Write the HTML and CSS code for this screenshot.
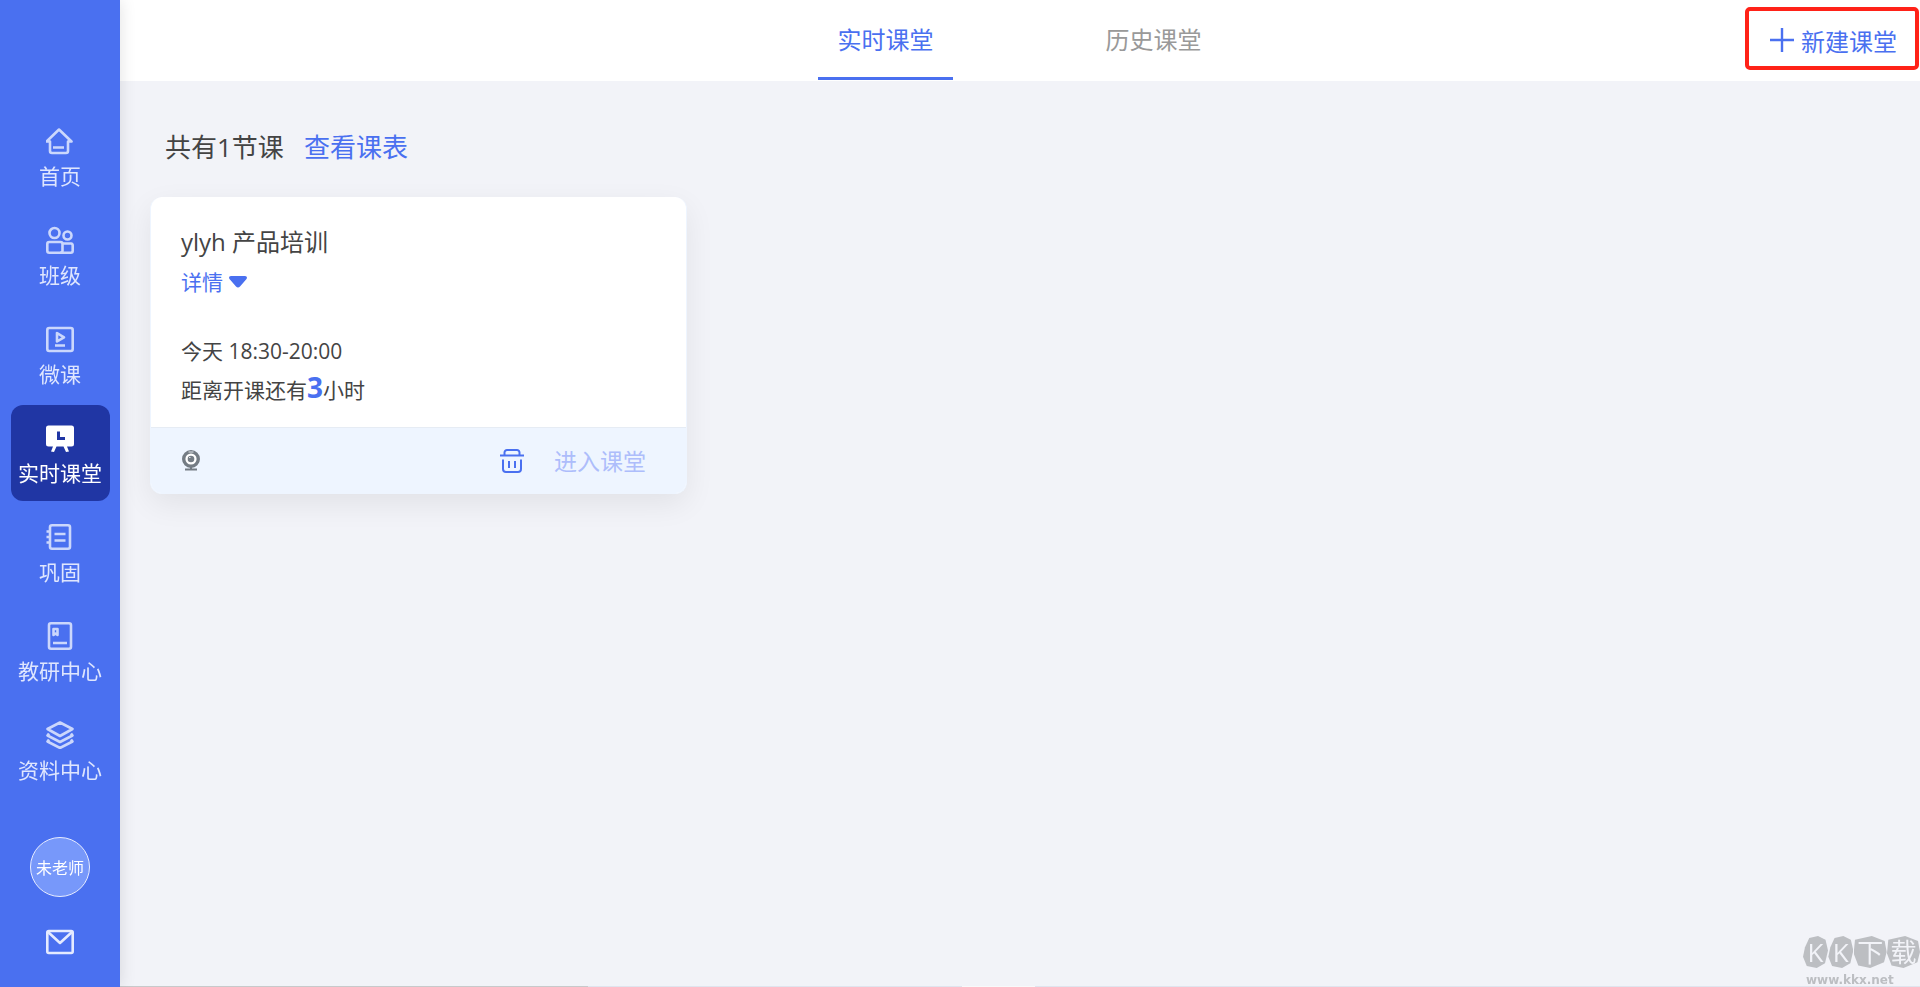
FILE: index.html
```html
<!DOCTYPE html>
<html lang="zh-CN">
<head>
    <meta charset="UTF-8">
    <meta name="viewport" content="width=device-width, initial-scale=1.0">
    <title>实时课堂</title>
    <link rel="stylesheet" href="styles.css">
</head>
<body>
    <aside class="sidebar">
        <nav class="menu">
            <a class="menu-item" href="#">
                <svg class="icon" viewBox="0 0 28 28"><path d="M4 14.500H.5L13 2.500l12.500 12H22V24a2 2 0 0 1-2 2H6a2 2 0 0 1-2-2zM7 20.500h11"/></svg>
                <span>首页</span>
            </a>
            <a class="menu-item" href="#">
                <svg class="icon" viewBox="0 0 28 28"><circle cx="8.500" cy="7" r="5"/><circle cx="21.500" cy="9.500" r="4"/><rect x="1.300" y="16" width="15.200" height="10.700" rx="2"/><path d="M16.500 17.500H25a2 2 0 0 1 1.700 2v5.200a2 2 0 0 1-2 2H14"/></svg>
                <span>班级</span>
            </a>
            <a class="menu-item" href="#">
                <svg class="icon" viewBox="0 0 28 28"><rect x="1.300" y="3" width="25.400" height="23" rx="2"/><path d="M11 8v8.500l7-4.200zM9 20.500h10"/></svg>
                <span>微课</span>
            </a>
            <a class="menu-item active" href="#">
                <svg class="icon" viewBox="0 0 28 28"><path class="solid" d="M2.500 1.500h23A2.500 2.500 0 0 1 28 4v16a2.500 2.500 0 0 1-2.500 2.500H21l2 5-3 .5-2.500-5.500h-7L8 28l-3-.5 2-5H2.500A2.500 2.500 0 0 1 0 20V4a2.500 2.500 0 0 1 2.500-2.500z"/><path class="hand" d="M12.500 7.500v7H19"/></svg>
                <span>实时课堂</span>
            </a>
            <a class="menu-item" href="#">
                <svg class="icon" viewBox="0 0 28 28"><rect x="4" y="2.300" width="20" height="23.500" rx="2"/><path d="M4 8.500H.5M4 14H.5M4 19.500H.5M8.500 11h11M8.500 17.500h11"/></svg>
                <span>巩固</span>
            </a>
            <a class="menu-item" href="#">
                <svg class="icon" viewBox="0 0 28 28"><rect x="3" y="1.300" width="22" height="25.400" rx="2"/><path d="M7.500 13V7h4v6l-2-1.500zM7 21h14"/></svg>
                <span>教研中心</span>
            </a>
            <a class="menu-item" href="#">
                <svg class="icon" viewBox="0 0 28 28"><path d="M14 1.500L26.500 8 14 15 1.500 8zM3 12.500L1.500 14.500 14 21l12.500-6.500-1.500-2M3 18.500l-1.500 2L14 27l12.500-6.500-1.500-2"/></svg>
                <span>资料中心</span>
            </a>
        </nav>
        <button class="avatar" type="button">未老师</button>
        <button class="mail" type="button" aria-label="消息">
            <svg class="icon" viewBox="0 0 28 28"><rect x="1.300" y="3" width="25.400" height="22" rx="1.500"/><path d="M2 4l12 11L26 4"/></svg>
        </button>
    </aside>

    <div class="page">
        <header class="topbar">
            <nav class="tabs">
                <a class="tab current" href="#">实时课堂</a>
                <a class="tab" href="#">历史课堂</a>
            </nav>
            <button class="create" type="button">
                <svg class="plus" viewBox="0 0 24 24"><path d="M12 0v24M0 12h24"/></svg>
                新建课堂
            </button>
        </header>

        <main class="content">
            <div class="summary">
                <span>共有1节课</span>
                <a href="#">查看课表</a>
            </div>

            <article class="card">
                <div class="card-body">
                    <h2>ylyh 产品培训</h2>
                    <button class="detail" type="button">
                        详情
                        <svg class="caret" viewBox="0 0 18 12"><path d="M2 0h14c2 0 2.500 2 1.300 3.200L11 10.500c-1.200 1.300-2.800 1.300-4 0L.7 3.200C-.5 2 0 0 2 0z"/></svg>
                    </button>
                    <p class="time">今天 18:30-20:00</p>
                    <p class="countdown">距离开课还有<strong>3</strong>小时</p>
                </div>
                <footer class="card-footer">
                    <svg class="webcam" viewBox="0 0 18 21"><circle class="ring" cx="9" cy="9" r="7.300"/><circle cx="9" cy="9" r="3.300"/><path d="M8 16h2v2.500h5v2H3v-2h5z"/><path class="shine" d="M6.500 2h5M7 7.500h1.500"/></svg>
                    <button class="remove" type="button" aria-label="删除">
                        <svg class="trash" viewBox="0 0 24 24"><path d="M0 6.500h24M4.500 6V3.500A2.500 2.500 0 0 1 7 1h10a2.500 2.500 0 0 1 2.500 2.500V6M3 10.500V20a3 3 0 0 0 3 3h12a3 3 0 0 0 3-3v-9.500M9 12v7M15 12v7"/></svg>
                    </button>
                    <button class="enter" type="button" disabled>进入课堂</button>
                </footer>
            </article>
        </main>
    </div>

    <div class="watermark">
        <div class="watermark-name"><span>K</span><span>K</span><span class="wide">下</span><span class="wide">载</span></div>
        <div class="watermark-url">www.kkx.net</div>
    </div>
    <div class="edge"></div>
</body>
</html>
```
FILE: styles.css
```css
* {
    box-sizing: border-box;
}
body {
    margin: 0;
    min-height: 100vh;
    display: flex;
    background: #f2f3f8;
    color: #444;
    font-family: "Open Sans", "Noto Sans CJK SC", sans-serif;
    font-weight: 400;
}
a {
    color: #4a70f0;
    text-decoration: none;
}
button {
    padding: 0;
    border: none;
    background: none;
    color: #4a70f0;
    font: inherit;
    cursor: pointer;
}
svg {
    display: block;
    flex: none;
}

/* sidebar */
.sidebar {
    width: 120px;
    flex: none;
    padding-top: 108px;
    display: flex;
    flex-direction: column;
    align-items: center;
    background: #4a70f0;
    box-shadow: 0 0 16px rgba(0, 0, 0, 0.12);
    z-index: 1;
}
.menu {
    display: flex;
    flex-direction: column;
    gap: 3px;
}
.menu-item {
    width: 99px;
    height: 96px;
    padding-top: 19px;
    display: flex;
    flex-direction: column;
    align-items: center;
    gap: 6px;
    border-radius: 12px;
    color: #dfe6fe;
    font-size: 21px;
    line-height: 30px;
    white-space: nowrap;
}
.menu-item.active {
    background: #2036a4;
    color: #fff;
}
.icon {
    width: 28px;
    height: 28px;
    fill: none;
    stroke: #cbd7fc;
    stroke-width: 2.6;
    stroke-linejoin: round;
}
.icon .solid {
    fill: #fff;
    stroke: none;
}
.icon .hand {
    stroke: #2036a4;
    stroke-width: 3;
    stroke-linejoin: miter;
}
.avatar {
    width: 60px;
    height: 60px;
    margin-top: 39px;
    border: 1px solid #e8edff;
    border-radius: 50%;
    background: #7798fa;
    color: #fff;
    font-size: 16px;
    white-space: nowrap;
}
.mail {
    margin-top: 31px;
}
.mail .icon {
    stroke: #e4eaff;
}

/* top bar */
.page {
    flex: 1;
    min-width: 0;
}
.topbar {
    height: 81px;
    display: grid;
    grid-template-columns: 1fr auto 1fr;
    align-items: start;
    padding-right: 1px;
    background: #fff;
    font-size: 24px;
}
.tabs {
    grid-column: 2;
    display: flex;
    gap: 133px;
}
.tab {
    width: 135px;
    height: 80px;
    border-bottom: 3px solid transparent;
    color: #999;
    line-height: 80px;
    text-align: center;
}
.tab.current {
    border-color: #4a70f0;
    color: #4a70f0;
}
.create {
    justify-self: end;
    height: 63px;
    margin-top: 7px;
    padding: 3px 18px 0 21px;
    display: flex;
    align-items: center;
    gap: 7px;
    border: 4px solid #ff2218;
    border-radius: 5px;
}
.plus {
    width: 24px;
    height: 24px;
    fill: none;
    stroke: #4a70f0;
    stroke-width: 2.4;
}

/* lesson list */
.content {
    padding: 46px 30px;
}
.summary {
    padding-left: 15px;
    display: flex;
    gap: 20px;
    font-size: 26px;
    line-height: 40px;
}
.card {
    width: 537px;
    margin-top: 30px;
    overflow: hidden;
    border: 1px solid #eef5ff;
    border-top: none;
    border-radius: 12px;
    background: #fff;
    box-shadow: 0 10px 30px rgba(0, 0, 0, 0.07);
}
.card-body {
    padding: 27px 30px 17px;
    font-size: 21px;
    line-height: 39px;
}
.card h2 {
    margin: 0 0 2px;
    font-size: 24px;
    font-weight: 400;
    line-height: 36px;
}
.detail {
    display: flex;
    align-items: center;
    gap: 6px;
    line-height: 40px;
}
.caret {
    width: 18px;
    height: 12px;
    fill: #4a70f0;
}
.card p {
    margin: 0;
}
.card .time {
    margin-top: 30px;
}
.countdown strong {
    color: #4a70f0;
    font-size: 28px;
    font-weight: 700;
    line-height: 30px;
}
.card-footer {
    height: 66px;
    padding: 0 40px 0 31px;
    display: flex;
    align-items: center;
    border-top: 1px solid #e6ecf4;
    background: #eef5ff;
}
.webcam {
    width: 18px;
    height: 21px;
    fill: #747c84;
}
.webcam .ring {
    fill: #fff;
    stroke: #747c84;
    stroke-width: 3.4;
}
.webcam .shine {
    stroke: #dfe3e8;
    stroke-width: 1;
}
.remove {
    margin-left: auto;
}
.trash {
    width: 24px;
    height: 24px;
    fill: none;
    stroke: #4a70f0;
    stroke-width: 2;
}
.enter {
    margin-left: 30px;
    color: #adbdfb;
    font-size: 23px;
    line-height: 30px;
    cursor: default;
}

/* watermark over the bottom right corner */
.watermark {
    position: fixed;
    right: 0;
    bottom: 0;
    width: 117px;
    color: #bcbec2;
    pointer-events: none;
}
.watermark-name {
    display: flex;
    justify-content: space-between;
    color: #f2f3f8;
    font-size: 26px;
    font-weight: 400;
    line-height: 32px;
    text-align: center;
}
.watermark-name span {
    width: 25px;
    background: #bcbec2;
    clip-path: polygon(25% 6%, 60% 0, 90% 12%, 100% 45%, 88% 85%, 55% 100%, 15% 94%, 0 65%, 8% 35%);
}
.watermark-name .wide {
    width: 33px;
    clip-path: polygon(4% 12%, 55% 0, 94% 16%, 100% 50%, 92% 82%, 50% 100%, 14% 92%, 0 55%);
}
.watermark-url {
    padding: 5px 0 0 3px;
    font-family: "DejaVu Sans", sans-serif;
    font-size: 12px;
    font-weight: 700;
    line-height: 14px;
}
.edge {
    position: fixed;
    left: 0;
    right: 0;
    bottom: 0;
    height: 1px;
    background: linear-gradient(90deg, #e4e8ef 72px, #c8c9cb 72px, #c8c9cb 588px, #e0e4ee 588px, #e0e4ee 962px, #f8f9fa 962px, #f8f9fa 1035px, #e0e4ee 1035px);
}
```
